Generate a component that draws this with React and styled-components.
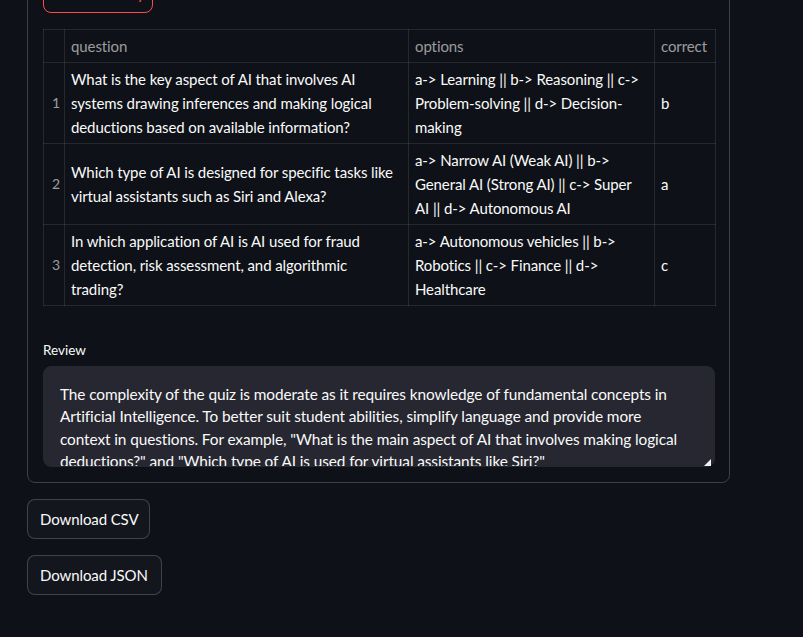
import React from 'react'
import styled, { createGlobalStyle } from 'styled-components'

const GlobalStyle = createGlobalStyle`
  html, body {
    margin: 0;
    padding: 0;
    background: #0e1117;
    overflow: hidden;
  }
  body {
    font-family: Lato, "Open Sans", sans-serif;
    color: #fafafa;
  }
`

const Page = styled.div`
  width: 803px;
  height: 637px;
  padding-left: 27px;
  box-sizing: border-box;
  display: flex;
  flex-direction: column;
  gap: 16px;
`

const Form = styled.div`
  width: 703px;
  box-sizing: border-box;
  margin-top: -44px;
  border: 1px solid rgba(250, 250, 250, 0.2);
  border-radius: 8px;
  padding: 16px 15px 15px;
  display: flex;
  flex-direction: column;
  gap: 16px;
`

const Button = styled.button`
  align-self: flex-start;
  height: 40px;
  padding: 0 12px;
  border-radius: 8px;
  font-family: inherit;
  font-size: 15px;
  letter-spacing: -0.1px;
  text-align: left;
  background: ${p => (p.$active ? '#0e1117' : '#13161d')};
  color: ${p => (p.$active ? '#ff4b4b' : '#fafafa')};
  border: 1px solid ${p => (p.$active ? '#ff4b4b' : 'rgba(250, 250, 250, 0.2)')};
  width: ${p => p.$width}px;
  white-space: nowrap;
`

const Table = styled.table`
  width: 672px;
  table-layout: fixed;
  border-collapse: collapse;
  font-size: 15px;
  letter-spacing: -0.1px;
  line-height: 24px;
  margin-bottom: 17px;
`

const Cell = styled.td`
  border: 1px solid rgba(250, 250, 250, 0.1);
  padding: 4px 6px;
  vertical-align: middle;
  font-weight: 400;
  color: ${p => (p.$muted ? 'rgba(250, 250, 250, 0.6)' : '#fafafa')};
  text-align: ${p => (p.$index ? 'right' : 'left')};
  padding-right: ${p => (p.$index ? '4px' : '6px')};
  padding-left: ${p => (p.$index ? '2px' : '6px')};
  font-size: ${p => (p.$index ? '14px' : '15px')};
`

const Field = styled.div`
  display: flex;
  flex-direction: column;
  gap: 5px;
`

const Label = styled.label`
  font-size: 13.5px;
  line-height: 22px;
`

const AreaWrap = styled.div`
  position: relative;
`

const Area = styled.textarea`
  display: block;
  width: 672px;
  height: 101px;
  box-sizing: border-box;
  margin: 0;
  padding: 16px 22px 16px 16px;
  background: #262730;
  border: 1px solid #262730;
  border-radius: 8px;
  color: #fafafa;
  font-family: inherit;
  font-size: 15.4px;
  letter-spacing: -0.1px;
  line-height: 22.4px;
  resize: none;
  overflow: hidden;
  outline: none;
`

const Grip = styled.div`
  position: absolute;
  right: 3px;
  bottom: 1px;
  width: 0;
  height: 0;
  border-left: 7px solid transparent;
  border-bottom: 7px solid #f0f0f0;
`

const rows = [
  {
    q: 'What is the key aspect of AI that involves AI systems drawing inferences and making logical deductions based on available information?',
    o: 'a-> Learning || b-> Reasoning || c-> Problem-solving || d-> Decision-making',
    c: 'b',
  },
  {
    q: 'Which type of AI is designed for specific tasks like virtual assistants such as Siri and Alexa?',
    o: 'a-> Narrow AI (Weak AI) || b-> General AI (Strong AI) || c-> Super AI || d-> Autonomous AI',
    c: 'a',
  },
  {
    q: 'In which application of AI is AI used for fraud detection, risk assessment, and algorithmic trading?',
    o: 'a-> Autonomous vehicles || b-> Robotics || c-> Finance || d-> Healthcare',
    c: 'c',
  },
]

const review =
  'The complexity of the quiz is moderate as it requires knowledge of fundamental concepts in Artificial Intelligence. To better suit student abilities, simplify language and provide more context in questions. For example, "What is the main aspect of AI that involves making logical deductions?" and "Which type of AI is used for virtual assistants like Siri?"'

export default function App() {
  return (
    <>
      <GlobalStyle />
      <Page>
        <Form>
          <Button $active $width={110}>Get Summary</Button>

          <Table>
            <colgroup>
              <col style={{ width: 21 }} />
              <col style={{ width: 344 }} />
              <col style={{ width: 246 }} />
              <col style={{ width: 61 }} />
            </colgroup>
            <thead>
              <tr>
                <Cell as="th" $muted />
                <Cell as="th" $muted>question</Cell>
                <Cell as="th" $muted>options</Cell>
                <Cell as="th" $muted>correct</Cell>
              </tr>
            </thead>
            <tbody>
              {rows.map((r, i) => (
                <tr key={i}>
                  <Cell $muted $index>{i + 1}</Cell>
                  <Cell>{r.q}</Cell>
                  <Cell>{r.o}</Cell>
                  <Cell>{r.c}</Cell>
                </tr>
              ))}
            </tbody>
          </Table>

          <Field>
            <Label>Review</Label>
            <AreaWrap>
              <Area readOnly defaultValue={review} />
              <Grip />
            </AreaWrap>
          </Field>
        </Form>

        <Button $width={123}>Download CSV</Button>
        <Button $width={135}>Download JSON</Button>
      </Page>
    </>
  )
}
